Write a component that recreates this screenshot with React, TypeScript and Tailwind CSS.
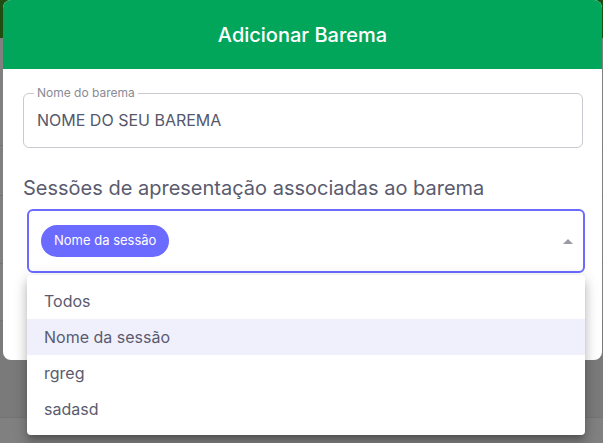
import { useState } from "react";

const sessions = ["Todos", "Nome da sessão", "rgreg", "sadasd"];

export default function App() {
  const [selected] = useState("Nome da sessão");

  return (
    <div className="relative h-[443px] w-[603px] overflow-hidden bg-[#808080] font-['Inter','Noto_Sans',sans-serif]">
      {/* Dimmed page behind the dialog */}
      <div className="h-[38px] bg-[#1f4d12]" />
      <div className="flex flex-col">
        <div className="h-[108px] border-b border-[#747474]" />
        <div className="h-[50px] border-b border-[#747474]" />
        <div className="h-[68px] border-b border-[#747474]" />
        <div className="h-[57px] border-b border-[#747474]" />
        <div className="h-[97px] border-b border-[#747474] bg-[#7a7a7a]" />
      </div>

      {/* Dialog */}
      <div className="absolute left-[3px] top-0 flex h-[360px] w-[599px] flex-col overflow-hidden rounded-lg bg-white">
        <div className="flex h-[69px] items-center justify-center bg-[#02a65b]">
          <h1 className="text-[20px] font-medium text-white">Adicionar Barema</h1>
        </div>

        <div className="flex flex-col px-5 pt-[18px]">
          {/* Outlined text field */}
          <fieldset className="h-[61px] w-[560px] rounded-md border border-[#c9c9cf] px-[10px] pb-0">
            <legend className="px-[3px] text-[12px] leading-none text-[#8a8a96]">Nome do barema</legend>
            <div className="mt-[9px] px-[3px] text-[16px] text-[#55576d]">NOME DO SEU BAREMA</div>
          </fieldset>

          <h2 className="mt-[25px] text-[20px] font-normal text-[#5a5b6e]">
            Sessões de apresentação associadas ao barema
          </h2>

          {/* Select (open) */}
          <div className="ml-1 mt-[6px] flex h-[64px] w-[558px] items-center justify-between rounded-md border-2 border-[#6b6bff] pl-3 pr-[10px]">
            <span className="flex h-[32px] items-center rounded-full bg-[#6b6bff] px-[13px] text-[13px] text-white">
              {selected}
            </span>
            <svg width="10" height="5" viewBox="0 0 10 5">
              <path d="M0 5 L5 0 L10 5 Z" fill="#9a9aa3" />
            </svg>
          </div>
        </div>
      </div>

      {/* Dropdown menu */}
      <ul className="absolute left-[27px] top-[275px] w-[558px] rounded bg-white py-2 shadow-[0_5px_5px_-3px_rgba(0,0,0,0.2),0_8px_10px_1px_rgba(0,0,0,0.14),0_3px_14px_2px_rgba(0,0,0,0.12)]">
        {sessions.map((s) => (
          <li
            key={s}
            className={`flex h-9 items-center px-[17px] text-[16px] text-[#5a5b6e] ${
              s === selected ? "bg-[#f0f0fd]" : ""
            }`}
          >
            {s}
          </li>
        ))}
      </ul>
    </div>
  );
}
